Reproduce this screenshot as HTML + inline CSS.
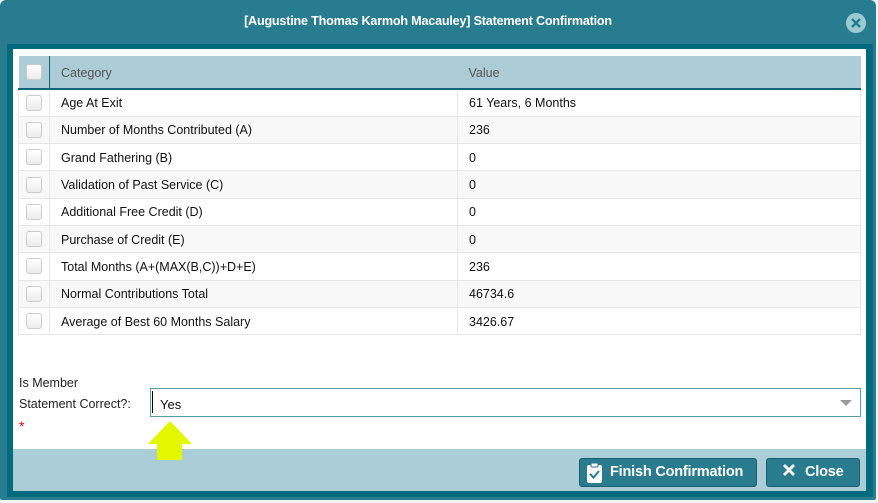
<!DOCTYPE html>
<html><head><style>
*{box-sizing:border-box;margin:0;padding:0}
body{width:878px;height:503px;background:#f2f2f2;font-family:"Liberation Sans",sans-serif;position:relative;overflow:hidden}
.dlg{position:absolute;left:0;top:0;width:876px;height:500px;background:#277d8f;border-radius:6px 6px 2px 2px}
.title{position:absolute;left:-10px;top:14px;width:876px;text-align:center;color:#fff;font-weight:bold;font-size:12.6px;letter-spacing:-0.2px}
.cl{position:absolute;left:846px;top:13px;width:20px;height:20px;border-radius:50%;background:#9ccbd4}
.frame{position:absolute;left:7px;top:44px;width:866px;height:453px;background:#046a7d}
.body{position:absolute;left:13px;top:49px;width:853px;height:400px;background:#fff}
.foot{position:absolute;left:13px;top:449px;width:853px;height:42px;background:#abcdd5}
table{position:absolute;left:18px;top:56px;width:843px;border-collapse:collapse;font-size:12.5px;color:#111}
td,th{height:27.3px;border:1px solid #e6e6e6;text-align:left;font-weight:normal;padding:1px 0 0 11px}
th{background:#adcdd6;color:#555;height:33px;border:none;border-bottom:2px solid #0d6677}
th:first-child{border-right:1px solid #0d6677}
td:first-child,th:first-child{width:31px;padding:0 0 0 7px}
tr:nth-child(odd) td{background:#f8f8f8}
.cb{width:16px;height:16px;border:1px solid #ccc;border-radius:3px;background:linear-gradient(#fff,#ececec)}
.lbl{position:absolute;left:19px;font-size:12.5px;color:#222}
.sel{position:absolute;left:150px;top:388px;width:711px;height:29px;border:1px solid #5c9aa8;background:#fff;font-size:13px;padding:8px 0 0 9px;color:#111}
.sel:before{content:"";position:absolute;left:1px;top:2px;width:1px;height:22px;background:#000}
.tri{position:absolute;right:8px;top:11px;border-left:6px solid transparent;border-right:6px solid transparent;border-top:6px solid #999}
.btn{position:absolute;top:458px;height:29px;background:#287c8e;border:1px solid #175f6f;border-radius:3px;color:#fff;font-weight:bold;font-size:14.5px;padding-top:5px;letter-spacing:-0.2px}
</style></head><body>
<div class="dlg"></div>
<div class="title">[Augustine Thomas Karmoh Macauley] Statement Confirmation</div>
<div class="cl"><svg width="20" height="20"><path d="M6 6L14 14M14 6L6 14" stroke="#277d8f" stroke-width="2.6"/></svg></div>
<div class="frame"></div>
<div class="body"></div>
<div class="foot"></div>
<table>
<tr><th><div class="cb"></div></th><th style="width:408px">Category</th><th>Value</th></tr>
<tr><td><div class="cb"></div></td><td>Age At Exit</td><td>61 Years, 6 Months</td></tr>
<tr><td><div class="cb"></div></td><td>Number of Months Contributed (A)</td><td>236</td></tr>
<tr><td><div class="cb"></div></td><td>Grand Fathering (B)</td><td>0</td></tr>
<tr><td><div class="cb"></div></td><td>Validation of Past Service (C)</td><td>0</td></tr>
<tr><td><div class="cb"></div></td><td>Additional Free Credit (D)</td><td>0</td></tr>
<tr><td><div class="cb"></div></td><td>Purchase of Credit (E)</td><td>0</td></tr>
<tr><td><div class="cb"></div></td><td>Total Months (A+(MAX(B,C))+D+E)</td><td>236</td></tr>
<tr><td><div class="cb"></div></td><td>Normal Contributions Total</td><td>46734.6</td></tr>
<tr><td><div class="cb"></div></td><td>Average of Best 60 Months Salary</td><td>3426.67</td></tr>
</table>
<div class="lbl" style="top:376px">Is Member</div>
<div class="lbl" style="top:397px">Statement Correct?:</div>
<div class="lbl" style="top:418px;color:#e00;font-size:14px">*</div>
<div class="sel">Yes<div class="tri"></div></div>
<svg style="position:absolute;left:146px;top:420px" width="48" height="42"><path d="M24 1L46 24L36 24L36 40L11 40L11 24L2 24Z" fill="#e2f700"/></svg>
<div class="btn" style="left:579px;width:178px;padding-left:30px">Finish Confirmation
<svg style="position:absolute;left:6px;top:3px" width="18" height="22"><rect x="1" y="3" width="15" height="18" rx="2" fill="#fff"/><rect x="5" y="1" width="7" height="4" rx="1" fill="#fff" stroke="#287c8e"/><path d="M4 12L7.5 15.5L13 9" stroke="#287c8e" stroke-width="2" fill="none"/></svg></div>
<div class="btn" style="left:766px;width:94px;padding-left:38px">Close
<svg style="position:absolute;left:16px;top:5px" width="12" height="12"><path d="M1 1L11 11M11 1L1 11" stroke="#fff" stroke-width="2.8"/></svg></div>
</body></html>
